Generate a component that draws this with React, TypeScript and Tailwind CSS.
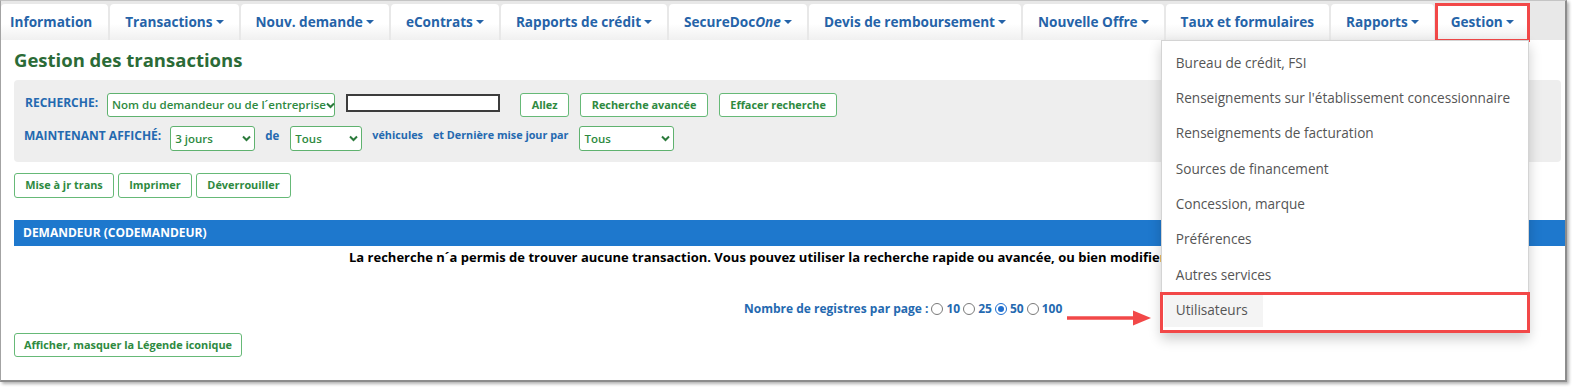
import React from "react";

const tabs: { label: string; italic?: string; caret?: boolean }[] = [
  { label: "Information" },
  { label: "Transactions", caret: true },
  { label: "Nouv. demande", caret: true },
  { label: "eContrats", caret: true },
  { label: "Rapports de crédit", caret: true },
  { label: "SecureDoc", italic: "One", caret: true },
  { label: "Devis de remboursement", caret: true },
  { label: "Nouvelle Offre", caret: true },
  { label: "Taux et formulaires" },
  { label: "Rapports", caret: true },
];

const menuItems = [
  "Bureau de crédit, FSI",
  "Renseignements sur l'établissement concessionnaire",
  "Renseignements de facturation",
  "Sources de financement",
  "Concession, marque",
  "Préférences",
  "Autres services",
];

const Caret = () => (
  <span className="ml-[3px] inline-block h-0 w-0 border-x-[4px] border-t-[4px] border-x-transparent border-t-current" />
);

const Chevron = () => (
  <svg width="9" height="7" viewBox="0 0 9 7" className="shrink-0">
    <polyline points="1,1.5 4.5,5 8,1.5" fill="none" stroke="#2b7a3b" strokeWidth="2" />
  </svg>
);

const Tab: React.FC<{ children: React.ReactNode; className?: string }> = ({ children, className }) => (
  <div
    className={
      "flex h-[36px] shrink-0 items-center whitespace-nowrap rounded-t-[4px] bg-linear-to-b from-white from-55% to-[#f0f0f0] text-[13.6px] font-bold text-[#2563a8] " +
      (className ?? "px-[15px]")
    }
  >
    {children}
  </div>
);

const GreenButton: React.FC<{ children: React.ReactNode; className?: string }> = ({ children, className }) => (
  <button
    className={
      "flex h-[24px] items-center justify-center whitespace-nowrap rounded-[3px] border border-[#66b977] bg-white text-[10.9px] font-bold text-[#2e8a3f] [font-stretch:88%] " +
      (className ?? "")
    }
  >
    {children}
  </button>
);

const Select: React.FC<{ value: string; className: string }> = ({ value, className }) => (
  <div
    className={
      "flex h-[24px] items-center justify-between whitespace-nowrap rounded-[3px] border border-[#5fb26f] bg-white pl-[4px] pr-[3px] text-[11.5px] font-semibold text-[#2e8a3f] [font-stretch:88%] " +
      className
    }
  >
    <span>{value}</span>
    <Chevron />
  </div>
);

const Radio: React.FC<{ checked?: boolean }> = ({ checked }) => (
  <span
    className={
      "mx-[1px] inline-flex h-[12px] w-[12px] items-center justify-center rounded-full border bg-white " +
      (checked ? "border-[#1f6fd0]" : "border-[#7a7a7a]")
    }
  >
    {checked && <span className="h-[6px] w-[6px] rounded-full bg-[#1f6fd0]" />}
  </span>
);

const Label: React.FC<{ children: React.ReactNode; className?: string }> = ({ children, className }) => (
  <span className={"whitespace-nowrap font-bold text-[#2469b0] " + (className ?? "")}>{children}</span>
);

const Nav = () => (
  <div className="flex h-[39px] shrink-0 items-end gap-[2px] bg-[#e8e8e8]">
    {tabs.map((t, i) => (
      <Tab key={t.label} className={i === 0 ? "pl-[9px] pr-[16px]" : undefined}>
        {t.label}
        {t.italic && <i>{t.italic}</i>}
        {t.caret && <Caret />}
      </Tab>
    ))}
    <div className="relative shrink-0">
      <Tab>
        Gestion
        <Caret />
      </Tab>
      <span className="absolute -inset-x-[1px] -top-[1px] -bottom-[2px] border-[3px] border-[#f24848]" />
      <div className="absolute right-0 top-full z-10 w-[368px] border border-[#d4d4d4] bg-white py-[4px] text-[13.6px] font-normal text-[#555] shadow-[0_6px_12px_rgba(0,0,0,0.2)]">
        {menuItems.map((m) => (
          <div key={m} className="flex h-[35.4px] items-center whitespace-nowrap pl-[14px]">
            {m}
          </div>
        ))}
        <div className="relative flex h-[35.4px] items-center">
          <span className="ml-[2px] flex h-[33px] items-center bg-[#f4f4f4] pl-[12px] pr-[15px]">Utilisateurs</span>
          <span className="absolute -left-[2px] -right-[2px] -top-[1px] -bottom-[5px] border-[3px] border-[#f24848]" />
        </div>
      </div>
    </div>
  </div>
);

const Arrow = () => (
  <svg className="absolute left-[1066px] top-[308px]" width="86" height="18" viewBox="0 0 86 18">
    <line x1="0" y1="9" x2="68" y2="9" stroke="#f24848" strokeWidth="3.5" />
    <polygon points="66,1.5 84,9 66,16.5" fill="#f24848" />
  </svg>
);

export default function App() {
  return (
    <div className="min-h-screen bg-white font-['Open_Sans',sans-serif]">
      <div className="relative flex h-[382px] w-[1567px] flex-col overflow-hidden border-t border-l border-r-2 border-b-2 border-t-[#c4c4c4] border-l-[#a3a3a3] border-r-[#8c8c8c] border-b-[#8c8c8c] bg-white shadow-[2px_2px_3px_rgba(0,0,0,0.3)]">
        <Nav />
        <div className="flex flex-col pl-[13px]">
          <h1 className="mt-[8px] text-[18.5px] font-bold leading-[24px] text-[#2b6b37]">Gestion des transactions</h1>

          <div className="mt-[8px] mr-[4px] flex flex-col gap-[9px] rounded-[4px] bg-[#eeeeee] pt-[13px] pb-[11px] pl-[11px]">
            <div className="flex items-center">
              <Label className="-mt-[4px] text-[12px] [font-stretch:89%]">RECHERCHE:</Label>
              <Select value="Nom du demandeur ou de l´entreprise" className="ml-[9px] w-[228px]" />
              <div className="ml-[11px] -mt-[5px] h-[18px] w-[154px] border-2 border-[#3c3c3c] bg-white" />
              <GreenButton className="ml-[20px] w-[49px]">Allez</GreenButton>
              <GreenButton className="ml-[11px] w-[128px]">Recherche avancée</GreenButton>
              <GreenButton className="ml-[11px] w-[118px]">Effacer recherche</GreenButton>
            </div>
            <div className="flex items-center">
              <Label className="-ml-[1px] -mt-[6px] text-[12px] [font-stretch:90%]">MAINTENANT AFFICHÉ:</Label>
              <Select value="3 jours" className="ml-[9px] h-[25px] w-[85px]" />
              <Label className="ml-[10px] -mt-[6px] text-[11.5px] [font-stretch:88%]">de</Label>
              <Select value="Tous" className="ml-[11px] h-[25px] w-[72px]" />
              <Label className="ml-[10px] -mt-[6px] text-[10.8px] [font-stretch:88%]">véhicules</Label>
              <Label className="ml-[10px] -mt-[6px] text-[10.8px] [font-stretch:88%]">et Dernière mise jour par</Label>
              <Select value="Tous" className="ml-[11px] h-[25px] w-[95px]" />
            </div>
          </div>

          <div className="mt-[11px] flex gap-[4px]">
            <GreenButton className="h-[25px] w-[100px]">Mise à jr trans</GreenButton>
            <GreenButton className="h-[25px] w-[74px]">Imprimer</GreenButton>
            <GreenButton className="h-[25px] w-[95px]">Déverrouiller</GreenButton>
          </div>

          <div className="mt-[22px] flex h-[26px] items-center bg-[#1e78cd] pl-[9px] text-[12px] font-bold text-white [font-stretch:89%]">
            DEMANDEUR (CODEMANDEUR)
          </div>

          <p className="mt-[3px] whitespace-nowrap pl-[335px] text-[13px] font-bold leading-[16px] text-black [font-stretch:91%]">
            La recherche n´a permis de trouver aucune transaction. Vous pouvez utiliser la recherche rapide ou avancée, ou bien modifier vos critères de recherche.
          </p>

          <div className="mt-[36px] flex h-[16px] items-center pl-[730px] text-[12px] font-bold text-[#2469b0] [font-stretch:91%]">
            <span className="mr-[2px]">Nombre de registres par page :</span>
            <Radio />
            <span className="ml-[2px] mr-[2px]">10</span>
            <Radio />
            <span className="ml-[2px] mr-[2px]">25</span>
            <Radio checked />
            <span className="ml-[2px] mr-[2px]">50</span>
            <Radio />
            <span className="ml-[2px]">100</span>
          </div>

          <div className="mt-[16px] flex">
            <GreenButton className="w-[228px]">Afficher, masquer la Légende iconique</GreenButton>
          </div>
        </div>
        <Arrow />
      </div>
    </div>
  );
}
